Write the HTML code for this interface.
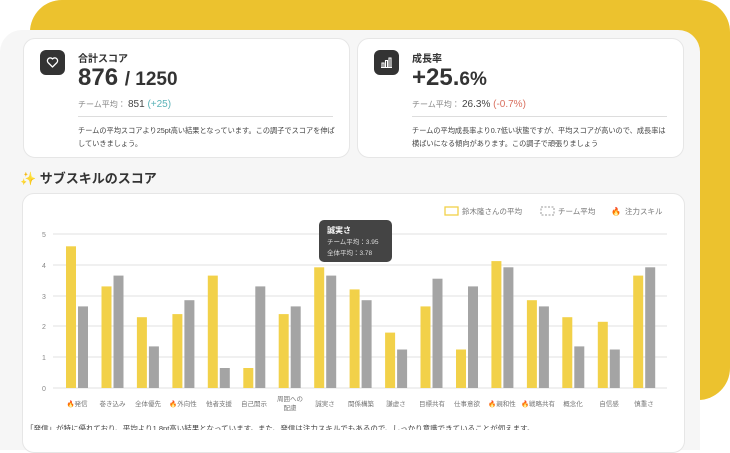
<!DOCTYPE html>
<html><head><meta charset="utf-8"><style>
*{margin:0;padding:0;box-sizing:border-box}
body{width:730px;height:430px;overflow:hidden;background:#fff;font-family:"Liberation Sans","Noto Sans CJK JP",sans-serif;color:#333;position:relative}
.y{position:absolute;left:30px;top:0;width:700px;height:400px;background:#ecc22e;border-radius:32px 32px 32px 32px}
.p{position:absolute;left:0;top:30px;width:700px;height:420px;background:#f6f6f6;border-radius:22px 22px 0 0}
.c{position:absolute;background:#fff;border:1px solid #e6e6e6;border-radius:12px}
.ic{position:absolute;left:16px;top:11px;width:25px;height:25px;background:#333;border-radius:6px}
.t{position:absolute;left:54px;top:11px;font-size:10px;font-weight:bold;color:#333}
.big{position:absolute;left:54px;top:25px;font-size:24px;font-weight:bold;color:#333}
.sub{position:absolute;left:54px;top:60px;font-size:8px;color:#888}
.sub b{font-weight:normal;font-size:10px;color:#444}
.hr{position:absolute;left:54px;right:16px;top:77px;border-top:1px solid #ddd}
.d{position:absolute;left:54px;right:12px;top:85px;font-size:7.2px;line-height:13px;color:#444}
</style></head><body>
<div class="y"></div><div class="p"></div>
<div class="c" style="left:23px;top:38px;width:327px;height:120px">
<div class="ic"><svg width="25" height="25" viewBox="0 0 25 25"><path d="M12.5 17 L8 12.5 A2.6 2.6 0 0 1 12.5 9 A2.6 2.6 0 0 1 17 12.5 Z" fill="none" stroke="#fff" stroke-width="1.3" stroke-linejoin="round"/></svg></div>
<div class="t">合計スコア</div>
<div class="big">876 <span style="font-size:19px">/ 1250</span></div>
<div class="sub">チーム平均： <b>851 <span style="color:#5bb3b8">(+25)</span></b></div>
<div class="hr"></div>
<div class="d">チームの平均スコアより25pt高い結果となっています。この調子でスコアを伸ばしていきましょう。</div>
</div>
<div class="c" style="left:357px;top:38px;width:327px;height:120px">
<div class="ic"><svg width="25" height="25" viewBox="0 0 25 25"><path d="M8 17V13H10V17M11.5 17V10.5H13.5V17M15 17V8H17V17M7 17.5H18" fill="none" stroke="#fff" stroke-width="1.1"/></svg></div>
<div class="t">成長率</div>
<div class="big">+25.<span style="font-size:19px">6%</span></div>
<div class="sub">チーム平均： <b>26.3% <span style="color:#d9705f">(-0.7%)</span></b></div>
<div class="hr"></div>
<div class="d">チームの平均成長率より0.7低い状態ですが、平均スコアが高いので、成長率は横ばいになる傾向があります。この調子で頑張りましょう</div>
</div>
<div style="position:absolute;left:20px;top:168px;font-size:13px;font-weight:bold;color:#333"><span style="color:#f2b632">✨</span> サブスキルのスコア</div>
<div class="c" style="left:22px;top:193px;width:663px;height:260px"></div>
<svg style="position:absolute;left:0;top:0" width="730" height="430" font-family="Liberation Sans,Noto Sans CJK JP,sans-serif">
<g stroke="#e2e2e2" stroke-width="1">
<line x1="53" y1="234" x2="667" y2="234"/><line x1="53" y1="265" x2="667" y2="265"/><line x1="53" y1="296" x2="667" y2="296"/><line x1="53" y1="326" x2="667" y2="326"/><line x1="53" y1="357" x2="667" y2="357"/><line x1="53" y1="388" x2="667" y2="388"/></g>
<g font-size="7" fill="#888"><text x="42" y="237">5</text><text x="42" y="268">4</text><text x="42" y="299">3</text><text x="42" y="329">2</text><text x="42" y="360">1</text><text x="42" y="391">0</text></g>
<g fill="#f2d149">
<rect x="66" y="246.3" width="10" height="141.7"/><rect x="101.5" y="286.4" width="10" height="101.6"/><rect x="136.9" y="317.2" width="10" height="70.8"/><rect x="172.4" y="314.1" width="10" height="73.9"/><rect x="207.8" y="275.6" width="10" height="112.4"/><rect x="243.3" y="368" width="10" height="20"/><rect x="278.7" y="314.1" width="10" height="73.9"/><rect x="314.2" y="267.3" width="10" height="120.7"/><rect x="349.6" y="289.4" width="10" height="98.6"/><rect x="385.1" y="332.6" width="10" height="55.4"/><rect x="420.5" y="306.4" width="10" height="81.6"/><rect x="456" y="349.5" width="10" height="38.5"/><rect x="491.4" y="261.1" width="10" height="126.9"/><rect x="526.9" y="300.2" width="10" height="87.8"/><rect x="562.3" y="317.2" width="10" height="70.8"/><rect x="597.8" y="321.8" width="10" height="66.2"/><rect x="633.2" y="275.6" width="10" height="112.4"/></g>
<g fill="#a4a4a4">
<rect x="78" y="306.4" width="10" height="81.6"/><rect x="113.5" y="275.6" width="10" height="112.4"/><rect x="148.9" y="346.4" width="10" height="41.6"/><rect x="184.4" y="300.2" width="10" height="87.8"/><rect x="219.8" y="368" width="10" height="20"/><rect x="255.3" y="286.4" width="10" height="101.6"/><rect x="290.7" y="306.4" width="10" height="81.6"/><rect x="326.2" y="275.6" width="10" height="112.4"/><rect x="361.6" y="300.2" width="10" height="87.8"/><rect x="397.1" y="349.5" width="10" height="38.5"/><rect x="432.5" y="278.7" width="10" height="109.3"/><rect x="468" y="286.4" width="10" height="101.6"/><rect x="503.4" y="267.3" width="10" height="120.7"/><rect x="538.9" y="306.4" width="10" height="81.6"/><rect x="574.3" y="346.4" width="10" height="41.6"/><rect x="609.8" y="349.5" width="10" height="38.5"/><rect x="645.2" y="267.3" width="10" height="120.7"/></g>
<g font-size="6.5" fill="#777" text-anchor="middle">
<text x="77" y="406"><tspan fill="#f08a24">🔥</tspan>発信</text><text x="112.5" y="406">巻き込み</text><text x="148" y="406">全体優先</text><text x="183" y="406"><tspan fill="#f08a24">🔥</tspan>外向性</text><text x="219" y="406">他者支援</text><text x="254" y="406">自己開示</text><text x="290" y="401">周囲への</text><text x="290" y="410">配慮</text><text x="325" y="406">誠実さ</text><text x="361" y="406">関係構築</text><text x="396" y="406">謙虚さ</text><text x="432" y="406">目標共有</text><text x="467" y="406">仕事意欲</text><text x="502" y="406"><tspan fill="#f08a24">🔥</tspan>親和性</text><text x="538" y="406"><tspan fill="#f08a24">🔥</tspan>戦略共有</text><text x="573" y="406">概念化</text><text x="609" y="406">自信感</text><text x="644" y="406">慎重さ</text></g>
<rect x="319" y="220" width="73" height="42" rx="5" fill="#444"/>
<text x="327" y="233" font-size="8" font-weight="bold" fill="#fff">誠実さ</text>
<text x="327" y="244" font-size="6.5" fill="#ddd">チーム平均：3.95</text>
<text x="327" y="255" font-size="6.5" fill="#ddd">全体平均：3.78</text>
<rect x="445" y="207" width="13" height="8" fill="#fff" stroke="#f2d149" stroke-width="1.3"/>
<text x="462" y="214" font-size="7.5" fill="#777">鈴木隆さんの平均</text>
<rect x="541" y="207" width="13" height="8" fill="#fff" stroke="#999" stroke-dasharray="2 1.5" stroke-width="1"/>
<text x="558" y="214" font-size="7.5" fill="#777">チーム平均</text>
<text x="611" y="214" font-size="8" fill="#f08a24">🔥</text>
<text x="625" y="214" font-size="7.5" fill="#777">注力スキル</text>
<text x="26" y="431" font-size="7.5" fill="#444">「発信」が特に優れており、平均より1.8pt高い結果となっています。また、発信は注力スキルでもあるので、しっかり意識できていることが伺えます。</text>
</svg>
</body></html>
